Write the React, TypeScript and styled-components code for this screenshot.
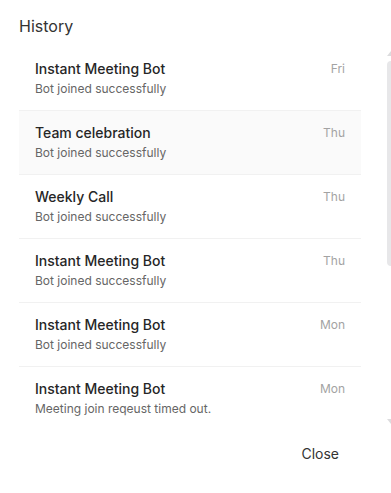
import React from "react";
import styled, { createGlobalStyle } from "styled-components";

const GlobalStyle = createGlobalStyle`
  html, body {
    margin: 0;
    padding: 0;
    background: #ffffff;
    overflow: hidden;
  }
  body {
    font-family: Inter, "Noto Sans", "Liberation Sans", sans-serif;
    -webkit-font-smoothing: antialiased;
  }
`;

const Dialog = styled.div`
  width: 391px;
  height: 493px;
  overflow: hidden;
  padding: 14px 0 0 19px;
  box-sizing: border-box;
  background: #ffffff;
`;

const Title = styled.h2`
  margin: 0 0 8px;
  font-size: 16px;
  line-height: 25px;
  font-weight: 400;
  color: #333333;
`;

const ScrollRegion = styled.div`
  display: flex;
  align-items: stretch;
  gap: 26px;
  height: 383px;
  width: 380px;
`;

const Viewport = styled.div`
  width: 342px;
  flex: none;
  overflow: hidden;
`;

const List = styled.ul`
  list-style: none;
  margin: 0;
  padding: 0;
`;

const Row = styled.li<{ $active?: boolean; $last?: boolean }>`
  display: flex;
  align-items: flex-start;
  justify-content: space-between;
  padding: 12px 16px 13px;
  border-bottom: 1px solid ${(p) => (p.$last ? "transparent" : "#f1f1f1")};
  background: ${(p) => (p.$active ? "#fafafa" : "#ffffff")};
`;

const Texts = styled.div`
  display: flex;
  flex-direction: column;
  gap: 2px;
  min-width: 0;
`;

const Name = styled.div`
  font-size: 14px;
  line-height: 20px;
  font-weight: 500;
  color: #262626;
`;

const Status = styled.div`
  font-size: 12px;
  line-height: 16px;
  font-weight: 400;
  color: #666666;
`;

const Day = styled.div`
  font-size: 12px;
  line-height: 20px;
  color: #a3a3a3;
`;

const Scrollbar = styled.div`
  width: 8px;
  flex: none;
  display: flex;
  flex-direction: column;
  align-items: center;
  padding: 4px 0 6px;
  box-sizing: border-box;
`;

const Arrow = styled.svg`
  display: block;
  width: 8px;
  height: 5px;
  flex: none;
`;

const Thumb = styled.div`
  width: 8px;
  height: 205px;
  margin-top: 5px;
  border-radius: 4px;
  background: #e7e7e9;
`;

const Spacer = styled.div`
  flex: 1;
`;

const Footer = styled.div`
  width: 342px;
  display: flex;
  justify-content: flex-end;
  padding-top: 6px;
`;

const CloseButton = styled.button`
  border: none;
  background: transparent;
  font-family: inherit;
  font-size: 14px;
  line-height: 20px;
  color: #333333;
  padding: 8px 22px;
  cursor: pointer;
`;

const items = [
  { name: "Instant Meeting Bot", status: "Bot joined successfully", day: "Fri" },
  { name: "Team celebration", status: "Bot joined successfully", day: "Thu", active: true },
  { name: "Weekly Call", status: "Bot joined successfully", day: "Thu" },
  { name: "Instant Meeting Bot", status: "Bot joined successfully", day: "Thu" },
  { name: "Instant Meeting Bot", status: "Bot joined successfully", day: "Mon" },
  { name: "Instant Meeting Bot", status: "Meeting join reqeust timed out.", day: "Mon" },
];

export default function App() {
  return (
    <>
      <GlobalStyle />
      <Dialog>
        <Title>History</Title>
        <ScrollRegion>
          <Viewport>
            <List>
              {items.map((it, i) => (
                <Row key={i} $active={it.active} $last={i === items.length - 1}>
                  <Texts>
                    <Name>{it.name}</Name>
                    <Status>{it.status}</Status>
                  </Texts>
                  <Day>{it.day}</Day>
                </Row>
              ))}
            </List>
          </Viewport>
          <Scrollbar aria-hidden="true">
            <Arrow viewBox="0 0 8 5">
              <path d="M0 5 L4 0 L8 5 Z" fill="#dcdcde" />
            </Arrow>
            <Thumb />
            <Spacer />
            <Arrow viewBox="0 0 8 5">
              <path d="M0 0 L4 5 L8 0 Z" fill="#dcdcde" />
            </Arrow>
          </Scrollbar>
        </ScrollRegion>
        <Footer>
          <CloseButton>Close</CloseButton>
        </Footer>
      </Dialog>
    </>
  );
}
